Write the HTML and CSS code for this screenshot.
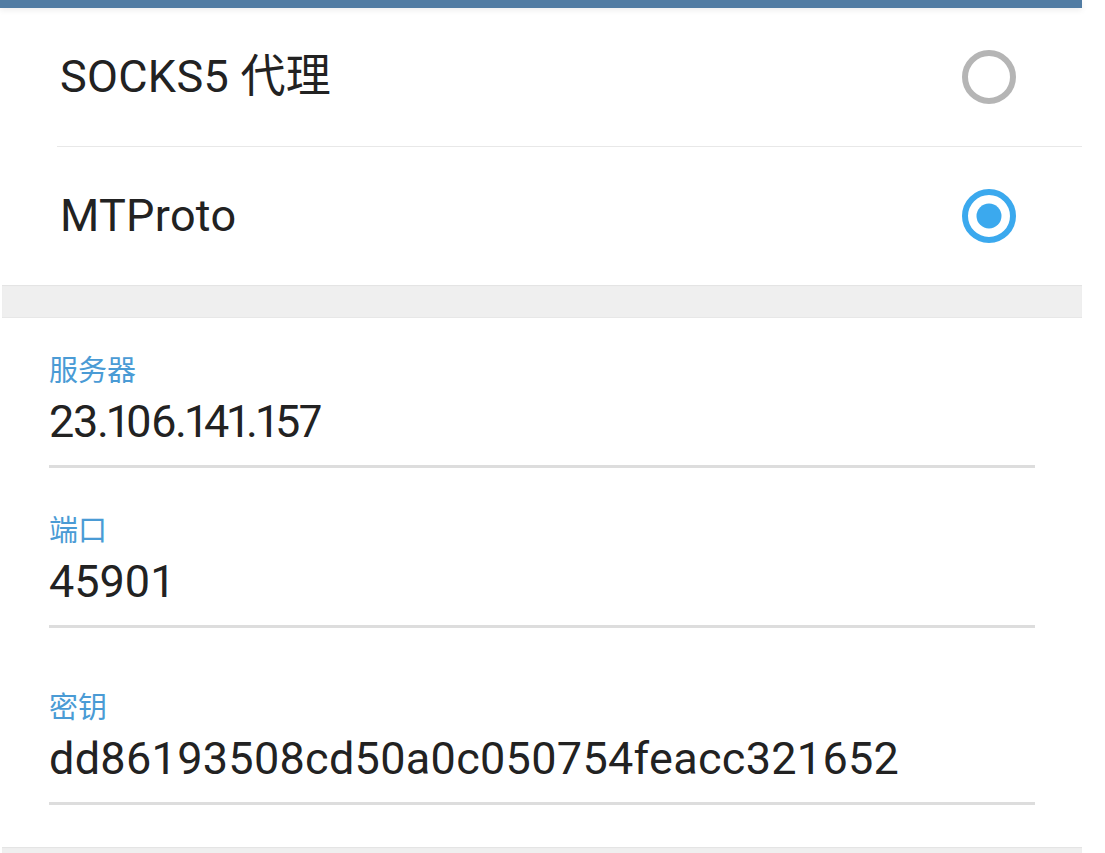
FILE: index.html
```html
<!DOCTYPE html>
<html lang="zh-CN">
<head>
<meta charset="utf-8">
<title>代理设置</title>
<link rel="stylesheet" href="styles.css">
</head>
<body>
<div class="page">
  <div class="topbar"></div>
  <div class="types">
    <div class="type-row">
      <span class="type-name">SOCKS5 代理</span>
      <svg class="radio" width="54" height="54" viewBox="0 0 54 54"><circle cx="27" cy="27" r="24" fill="none" stroke="#b5b5b5" stroke-width="6"/></svg>
    </div>
    <div class="divider"></div>
    <div class="type-row">
      <span class="type-name">MTProto</span>
      <svg class="radio" width="54" height="54" viewBox="0 0 54 54"><circle cx="27" cy="27" r="24" fill="none" stroke="#3ba9ee" stroke-width="6"/><circle cx="27" cy="27" r="12.5" fill="#3ba9ee"/></svg>
    </div>
  </div>
  <div class="band"></div>
  <div class="fields">
    <div class="field">
      <div class="label">服务器</div>
      <div class="value ip">23.106.141.157</div>
      <div class="line"></div>
    </div>
    <div class="field">
      <div class="label">端口</div>
      <div class="value">45901</div>
      <div class="line"></div>
    </div>
    <div class="field field-secret">
      <div class="label">密钥</div>
      <div class="value secret">dd86193508cd50a0c050754feacc321652</div>
      <div class="line"></div>
    </div>
  </div>
  <div class="band band-bottom"></div>
</div>
</body>
</html>
```

FILE: styles.css
```css
html, body {
  margin: 0;
  padding: 0;
  background: #ffffff;
}
body {
  font-family: Roboto, "Noto Sans CJK SC", sans-serif;
  color: #222222;
}
.page {
  width: 1082px;
  display: flex;
  flex-direction: column;
}
.topbar {
  height: 8px;
  background: #517ca3;
  box-shadow: 0 2px 6px rgba(0, 0, 0, 0.08);
  position: relative;
  z-index: 1;
}
.types {
  display: flex;
  flex-direction: column;
}
.type-row {
  height: 138px;
  display: flex;
  align-items: center;
  justify-content: space-between;
  padding: 0 66px 0 60px;
}
.type-name {
  font-size: 45px;
  line-height: 56px;
  font-family: Roboto, "Noto Sans CJK SC", sans-serif;
  letter-spacing: 0.3px;
}
.radio {
  display: block;
  flex: none;
}
.divider {
  height: 1px;
  margin-left: 57px;
  background: #e8e8e8;
}
.band {
  height: 33px;
  margin-left: 2px;
  background: #efefef;
  box-shadow: inset 0 1px 1px rgba(0, 0, 0, 0.05), inset 0 -1px 0 rgba(0, 0, 0, 0.03);
}
.band-bottom {
  height: 7px;
}
.fields {
  display: flex;
  flex-direction: column;
  padding: 32px 47px 42px 49px;
}
.field {
  display: flex;
  flex-direction: column;
}
.field + .field {
  margin-top: 42px;
}
.field + .field-secret {
  margin-top: 59px;
}
.label {
  font-family: "Noto Sans CJK SC", sans-serif;
  font-size: 29px;
  line-height: 36px;
  color: #4a9bd5;
}
.value {
  margin-top: 8px;
  font-size: 45px;
  line-height: 56px;
  color: #222222;
}
.ip {
  font-variant-numeric: proportional-nums;
  letter-spacing: -1.3px;
}
.secret {
  letter-spacing: 0.3px;
}
.line {
  margin-top: 15px;
  height: 3px;
  background: #dddddd;
}
```
